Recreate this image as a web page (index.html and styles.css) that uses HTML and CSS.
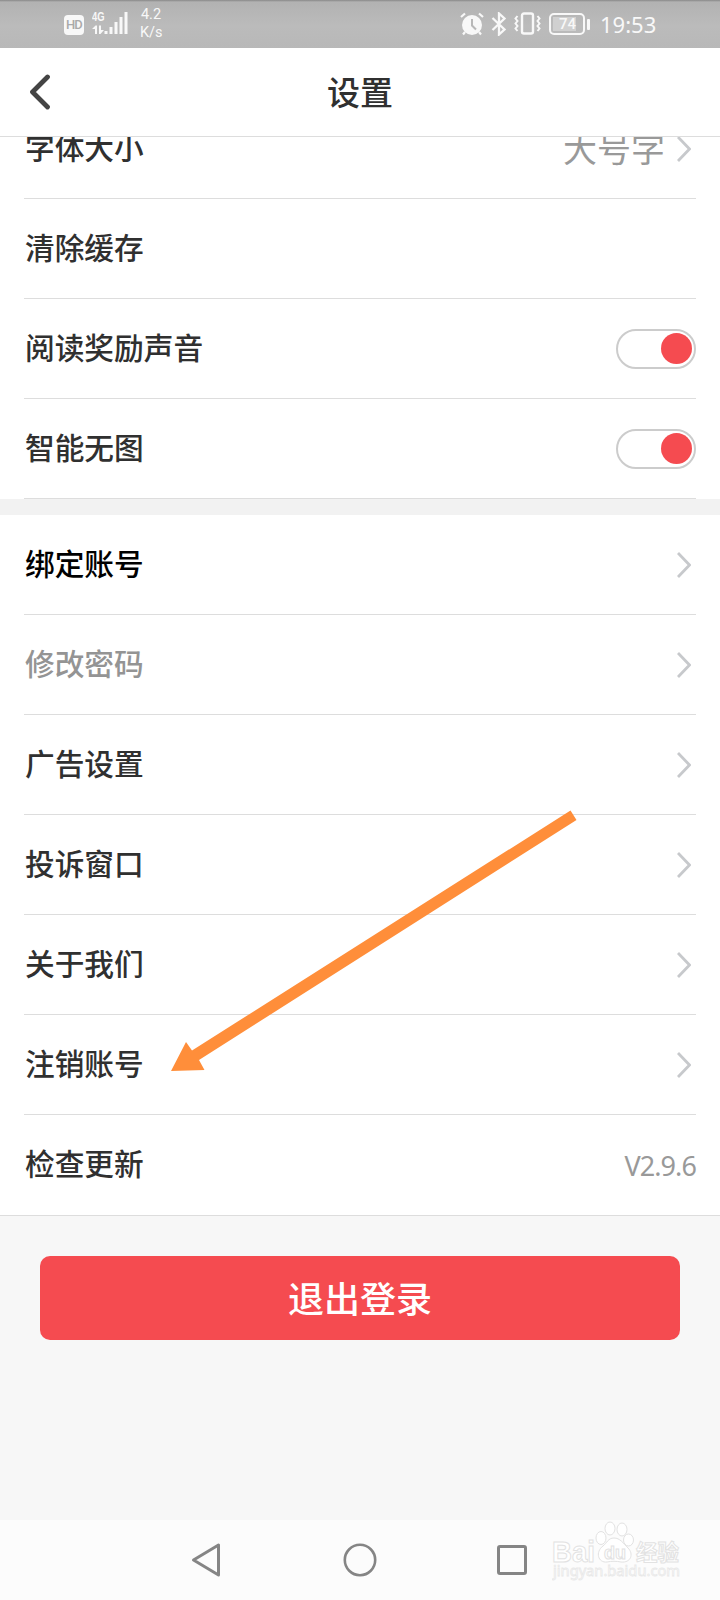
FILE: index.html
```html
<!DOCTYPE html>
<html lang="zh-CN">
<head>
<meta charset="utf-8">
<title>设置</title>
<link rel="stylesheet" href="styles.css">
</head>
<body>
<div class="screen">
  <div class="status">
    <span class="hd">HD</span>
    <div class="cell">
      <span class="net">4G</span>
      <svg width="36" height="24" viewBox="0 0 36 24"><g fill="#f8f8f8"><path d="M0 17l3.500-3.500h1.500V22H3v-5zM7 13.500h2V18h3l-3.500 4H7z"/><rect x="12.500" y="19" width="3" height="3"/><rect x="17.500" y="15" width="3" height="7"/><rect x="22.500" y="10" width="3" height="12"/><rect x="27.500" y="5" width="3" height="17"/><rect x="32.500" y="0" width="3" height="22"/></g></svg>
    </div>
    <div class="speed"><span>4.2</span><span>K/s</span></div>
    <div class="status-right">
      <svg width="24" height="24" viewBox="0 0 24 24"><circle cx="12" cy="13" r="10" fill="#f8f8f8"/><path d="M12 7v6.500l4 4" fill="none" stroke="#b8b8b8" stroke-width="2"/><path d="M1 5l4-3.500M23 5l-4-3.500M5 20l-2 2.500M19 20l2 2.500" stroke="#f8f8f8" stroke-width="2.200"/></svg>
      <svg class="bt" width="16" height="24" viewBox="0 0 16 24"><path d="M1.500 6l12 11.500L8 22.500V1.500l5.500 5L1.500 18" fill="none" stroke="#f8f8f8" stroke-width="2.300"/></svg>
      <svg class="vib" width="27" height="24" viewBox="0 0 27 24"><g fill="none" stroke="#f8f8f8" stroke-width="2"><rect x="8" y="1.500" width="11" height="20" rx="2" stroke-width="2.400"/><path d="M3.500 4l-2 2.500 2 2.500-2 2.500 2 2.500-2 2.500 2 2.500M23.500 4l2 2.500-2 2.500 2 2.500-2 2.500 2 2.500-2 2.500"/></g></svg>
      <div class="battery"><span>74</span></div>
      <i class="tip"></i>
      <time>19:53</time>
    </div>
  </div>
  <header class="header">
    <svg class="back" width="22" height="36" viewBox="0 0 22 36"><path d="M18.500 3L3.500 18l15 15" fill="none" stroke="#444" stroke-width="4.800" stroke-linecap="round" stroke-linejoin="round"/></svg>
    <h1>设置</h1>
  </header>
  <main class="content">
    <section class="group first">
      <div class="row cut"><span>字体大小</span><span class="value">大号字</span><svg class="chev" viewBox="0 0 14 26"><path d="M1 1l11.500 12L1 25"/></svg></div>
      <div class="row"><span>清除缓存</span></div>
      <div class="row"><span>阅读奖励声音</span><i class="toggle"></i></div>
      <div class="row"><span>智能无图</span><i class="toggle"></i></div>
    </section>
    <section class="group second">
      <div class="row strong"><span>绑定账号</span><svg class="chev" viewBox="0 0 14 26"><path d="M1 1l11.500 12L1 25"/></svg></div>
      <div class="row muted"><span>修改密码</span><svg class="chev" viewBox="0 0 14 26"><path d="M1 1l11.500 12L1 25"/></svg></div>
      <div class="row"><span>广告设置</span><svg class="chev" viewBox="0 0 14 26"><path d="M1 1l11.500 12L1 25"/></svg></div>
      <div class="row"><span>投诉窗口</span><svg class="chev" viewBox="0 0 14 26"><path d="M1 1l11.500 12L1 25"/></svg></div>
      <div class="row"><span>关于我们</span><svg class="chev" viewBox="0 0 14 26"><path d="M1 1l11.500 12L1 25"/></svg></div>
      <div class="row"><span>注销账号</span><svg class="chev" viewBox="0 0 14 26"><path d="M1 1l11.500 12L1 25"/></svg></div>
      <div class="row last"><span>检查更新</span><span class="version">V2.9.6</span></div>
    </section>
    <button class="logout">退出登录</button>
  </main>
  <nav class="nav">
    <svg width="32" height="36" viewBox="0 0 32 36"><path d="M28.500 3v30L3.500 18z" fill="none" stroke="#858585" stroke-width="3" stroke-linejoin="round"/></svg>
    <svg width="36" height="36" viewBox="0 0 36 36"><circle cx="18" cy="18" r="15.200" fill="none" stroke="#858585" stroke-width="2.600"/></svg>
    <svg width="32" height="32" viewBox="0 0 32 32"><rect x="2.500" y="2.500" width="27" height="27" rx="1.500" fill="none" stroke="#858585" stroke-width="3"/></svg>
  </nav>
  <svg class="arrow" width="410" height="270" viewBox="0 0 410 270"><path d="M400.500 1.500L406.500 11L29 251L34.500 261L1 262L16 233L22 241.500Z" fill="#ff8e3a"/></svg>
  <svg class="mark" width="140" height="70" viewBox="0 0 140 70">
    <g fill="#fff" stroke="#e2e2e2" stroke-width="1">
      <text class="mark-latin" x="0" y="41" textLength="43" lengthAdjust="spacingAndGlyphs">Bai</text>
      <ellipse cx="49" cy="17" rx="5" ry="6.500"/><ellipse cx="58" cy="7.500" rx="5" ry="6.500"/><ellipse cx="70" cy="8.500" rx="5" ry="6.500"/><ellipse cx="76.500" cy="19" rx="5" ry="6"/>
      <path d="M62 17c-6 0-7 5-11 8-8 6-5 17 4 16 5-1 9-1 14 0 10 1 13-8 7-14-5-5-8-10-14-10z"/>
      <text class="mark-du" x="52" y="38">du</text>
      <text class="mark-cjk" x="84" y="39">经验</text>
      <text class="mark-url" x="1" y="55" textLength="127" lengthAdjust="spacingAndGlyphs">jingyan.baidu.com</text>
    </g>
  </svg>
</div>
</body>
</html>
```
FILE: styles.css
```css
* { box-sizing: border-box; }
body { margin: 0; font-family: "Noto Sans CJK SC", sans-serif; color: #303030; }
.screen { position: relative; width: 720px; height: 1600px; display: flex; flex-direction: column; background: #f7f7f7; overflow: hidden; }
.screen svg { flex: none; display: block; }

.status { height: 48px; flex: none; display: flex; align-items: center; padding-left: 64px; background: linear-gradient(#888 0, #b2b2b2 2px, #bbb 26px, #b8b8b8 48px); color: #f8f8f8; font-family: "Noto Sans", sans-serif; }
.hd { width: 20px; height: 20px; margin-top: 2px; border-radius: 4px; background: #f8f8f8; color: #aaa; font: 500 13px/20px Roboto, sans-serif; letter-spacing: -.8px; text-align: center; }
.cell { margin-left: 8px; height: 24px; position: relative; }
.net { position: absolute; left: 0; top: -1px; font: bold 13px/12px "Liberation Sans", sans-serif; transform: scaleX(.72); transform-origin: 0 0; }
.speed { display: flex; flex-direction: column; width: 22px; margin-left: 12px; font: 14.500px/18px Roboto, sans-serif; text-align: center; }
.status-right { margin-left: auto; padding-right: 64px; display: flex; align-items: center; }
.bt { margin-left: 7px; }
.vib { margin-left: 7px; }
.battery { width: 36px; height: 22px; margin-left: 8px; border: 2px solid #f8f8f8; border-radius: 5px; display: flex; padding: 2px; }
.battery span { width: 23px; height: 14px; background: #d0d0d0; font: 500 15px/15px Roboto, sans-serif; padding-left: 6px; }
.tip { width: 3px; height: 11px; margin-left: 2px; background: #f8f8f8; border-radius: 1px; }
time { width: 56px; margin-left: 10px; font-size: 22px; line-height: 30px; white-space: nowrap; }

.header { position: relative; flex: none; height: 89px; background: #fff; border-bottom: 1px solid #ddd; display: flex; align-items: center; }
.back { margin-left: 29px; }
h1 { flex: 1; margin: 0 51px 2px 0; text-align: center; font-size: 33px; line-height: 48px; font-weight: 500; }

.content { flex: 1; min-height: 0; overflow: hidden; }
.group { background: #fff; padding: 0 24px; }
.first { height: 362px; overflow: hidden; }
.second { margin-top: 16px; border-bottom: 1px solid #ddd; position: relative; }
.second::before { content: ""; position: absolute; left: 0; right: 0; top: -16px; height: 16px; background: #f2f2f2; }
.row { height: 100px; display: flex; align-items: center; border-bottom: 1px solid #ddd; font-size: 29.700px; line-height: 44px; font-weight: 500; }
.row > :first-child { flex: 1; padding: 0 0 4px 1px; }
.cut { margin-top: -38px; }
.last { border-bottom: 0; }
.strong { color: #000; }
.muted { color: #949494; }
.value { font-size: 34px; color: #999; font-weight: 400; margin: 0 12px 1px 0; }
.version { font-family: "Noto Sans", sans-serif; font-size: 27px; font-weight: 400; color: #999; letter-spacing: -.9px; padding-top: 2px; }
.chev { width: 14px; height: 26px; margin-right: 5px; fill: none; stroke: #c7c9cc; stroke-width: 2.8; }
.toggle { width: 80px; height: 40px; border: 2px solid #ccc; border-radius: 20px; display: flex; justify-content: flex-end; align-items: center; padding-right: 2.5px; }
.toggle::after { content: ""; width: 31px; height: 31px; border-radius: 50%; background: #f54b50; }
.logout { display: block; width: 640px; height: 84px; margin: 40px auto 0; padding: 0 0 3px; border: 0; border-radius: 10px; background: #f54b50; color: #fff; font: 500 36px/54px "Noto Sans CJK SC", sans-serif; }

.nav { flex: none; height: 80px; background: #fcfcfc; display: flex; align-items: center; padding-left: 190px; }
.nav svg:nth-child(2) { margin-left: 120px; }
.nav svg:nth-child(3) { margin-left: 118px; }

.arrow { position: absolute; left: 170px; top: 809px; }
.mark { position: absolute; left: 552px; top: 1521px; }
.mark-latin { font: bold 30px "Liberation Sans", sans-serif; }
.mark-du { font: bold 18px "Liberation Sans", sans-serif; }
.mark-cjk { font: 700 21.500px "Noto Sans CJK SC", sans-serif; }
.mark-url { font: 15px "Noto Sans", sans-serif; stroke: #e8e8e8; stroke-width: .8px; }
```
